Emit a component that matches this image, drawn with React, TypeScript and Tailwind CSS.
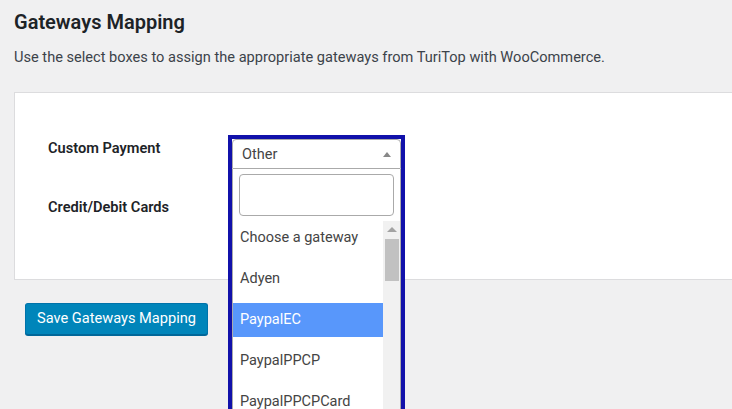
import React from "react";

const gateways = ["Choose a gateway", "Adyen", "PaypalEC", "PaypalPPCP", "PaypalPPCPCard"];

function OpenSelect() {
  return (
    <div className="relative h-[30px]">
      <div className="absolute left-0 top-0 z-10 w-full bg-white outline-[4px] outline-solid outline-[#1111aa]">
        {/* select head */}
        <div className="flex h-[30px] items-center justify-between border border-[#aaaaaa] rounded-t-[4px] pl-[9px] pr-[9px] pt-[1px] text-[14.5px] text-[#444444]">
          <span>Other</span>
          <span className="h-0 w-0 border-x-[4px] border-b-[5px] border-x-transparent border-b-[#888888]" />
        </div>
        {/* dropdown */}
        <div className="h-[240px] border-x border-[#aaaaaa] overflow-hidden">
          <div className="px-[6px] pt-[5px] pb-[5px]">
            <div className="h-[42px] rounded-[4px] border border-[#aaaaaa] bg-white" />
          </div>
          <div className="flex">
            <div className="flex flex-1 flex-col gap-[7px]">
              {gateways.map((g) => (
                <div
                  key={g}
                  className={
                    g === "PaypalEC"
                      ? "flex h-[34px] shrink-0 items-center bg-[#5897fb] px-[7px] text-[14.5px] text-white"
                      : "flex h-[34px] shrink-0 items-center px-[7px] text-[14.5px] text-[#444444]"
                  }
                >
                  {g}
                </div>
              ))}
            </div>
            {/* scrollbar */}
            <div className="flex h-[200px] w-[17px] flex-col items-center bg-[#f1f1f1]">
              <div className="mt-[6px] h-0 w-0 border-x-[5px] border-b-[5px] border-x-transparent border-b-[#a3a3a3]" />
              <div className="mt-[7px] h-[42px] w-[14px] bg-[#c1c1c1]" />
            </div>
          </div>
        </div>
      </div>
    </div>
  );
}

export default function App() {
  return (
    <div
      className="h-[409px] overflow-hidden bg-[#f0f0f1] pl-[14px]"
      style={{ fontFamily: "Roboto, 'Liberation Sans', sans-serif" }}
    >
      <h1 className="pt-[10px] text-[20px] font-semibold leading-[24px] text-[#1d2327]">
        Gateways Mapping
      </h1>
      <p className="mt-[13px] text-[14.6px] leading-[20px] text-[#3c434a]">
        Use the select boxes to assign the appropriate gateways from TuriTop with WooCommerce.
      </p>

      <div className="mt-[25px] h-[188px] border border-r-0 border-[#dcdcde] bg-white pl-[33px] pt-[46px]">
        <div className="grid grid-cols-[184px_169px] gap-y-[29px]">
          <div className="text-[14.6px] font-semibold leading-[18px] text-[#1d2327]">
            Custom Payment
          </div>
          <OpenSelect />
          <div className="text-[14.6px] font-semibold leading-[18px] text-[#1d2327]">
            Credit/Debit Cards
          </div>
          <div className="flex h-[30px] items-center rounded-[4px] border border-[#aaaaaa] pl-[9px] text-[14.5px] text-[#444444]">
            Choose a gateway
          </div>
        </div>
      </div>

      <button className="ml-[11px] mt-[23px] h-[32px] rounded-[3px] border border-[#0073aa] border-b-[#006799] bg-[#0085ba] px-[11px] text-[14.6px] text-white shadow-[0_1px_0_#006799]">
        Save Gateways Mapping
      </button>
    </div>
  );
}
